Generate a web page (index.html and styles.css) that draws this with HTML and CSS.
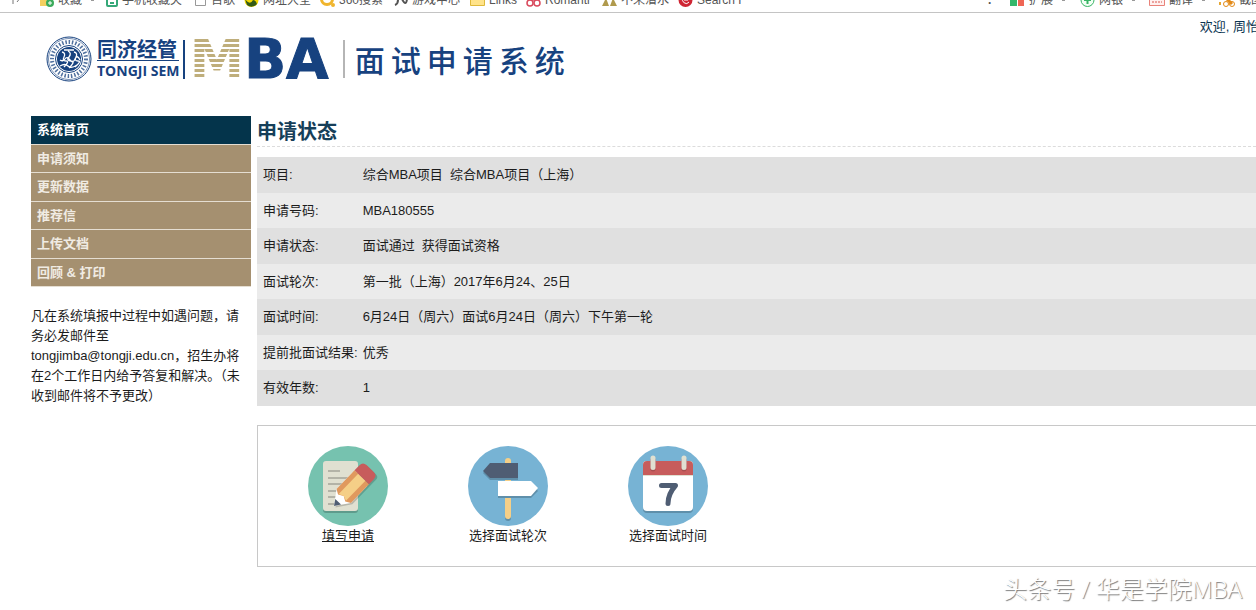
FILE: index.html
```html
<!DOCTYPE html>
<html lang="zh-CN">
<head>
<meta charset="utf-8">
<title>面试申请系统</title>
<link rel="stylesheet" href="styles.css">
</head>
<body>
<div class="bookmarks">
  <span class="mark"><svg width="15" height="16"><path d="M3 1v11M7 10l4-5" stroke="#777" fill="none"/></svg></span>
  <span class="mark"><svg width="15" height="16"><path d="M1 3h12v11H1z" fill="#f5d060"/><circle cx="11" cy="11" r="4" fill="#3cab5c"/><path d="M9 11h4M11 9v4" stroke="#fff"/></svg>收藏 <i class="caret"></i></span>
  <span class="mark"><svg width="12" height="16"><rect x="1" y="1" width="10" height="13" rx="1" fill="none" stroke="#35a878" stroke-width="2"/><path d="M4 11h4" stroke="#35a878" stroke-width="2"/></svg>手机收藏夹</span>
  <span class="mark"><svg width="13" height="16"><path d="M1.500 1.500h10v12h-10z" fill="#fff" stroke="#999"/></svg>百歌</span>
  <span class="mark"><svg width="15" height="16"><circle cx="7.500" cy="8" r="7" fill="#f4d800"/><path d="M1 7q5 7 8 1q3 0 4 4a7 7 0 0 1-10 1z" fill="#345b16"/></svg>网址大全</span>
  <span class="mark"><svg width="15" height="16"><circle cx="7" cy="7" r="5.500" fill="none" stroke="#f0b52d" stroke-width="3"/><circle cx="13" cy="13" r="2" fill="#f0b52d"/></svg>360搜索</span>
  <span class="mark"><svg width="15" height="16"><path d="M2 3q3 1 3 5t-3 5M9 7q4 8 5 0" fill="none" stroke="#555" stroke-width="2"/></svg>游戏中心</span>
  <span class="mark"><svg width="15" height="16"><path d="M.5 3.500h14v10H.5z" fill="#ffe38a" stroke="#dfb93b"/></svg>Links</span>
  <span class="mark"><svg width="15" height="16"><g fill="none" stroke="#d94a5d" stroke-width="1.500"><circle cx="4" cy="11" r="3"/><circle cx="11" cy="11" r="3"/><circle cx="7.500" cy="5" r="3"/></g></svg>Romanti</span>
  <span class="mark"><svg width="15" height="16"><path d="M0 14L4 6l3 8zM8 14l3-8 4 8z" fill="#b09a4d"/></svg>不来潜水</span>
  <span class="mark"><svg width="15" height="16"><circle cx="7.500" cy="8" r="7" fill="#cf2634"/><path d="M10 5a3.500 3.500 0 1 0 1 5M6 8h4" fill="none" stroke="#fff"/></svg>Search F</span>
  <span class="mark dot">.</span>
  <span class="mark"><svg width="15" height="16"><path d="M0 1h7v13H0z" fill="#34b76b"/><path d="M8 8h6v6H8z" fill="#ef6655"/></svg>扩展 <i class="caret"></i></span>
  <span class="mark"><svg width="15" height="16"><circle cx="7.500" cy="8" r="6.500" fill="#f2fff5" stroke="#38b565"/><path d="M4 8h7M7.500 5v7" stroke="#38b565" stroke-width="2"/></svg>网银 <i class="caret"></i></span>
  <span class="mark"><svg width="16" height="16"><path d="M.5 2.500h15v11H.5z" fill="#fff0ee" stroke="#e98279"/><path d="M3 10h10" stroke="#d9574f" stroke-dasharray="2 1"/></svg>翻译 <i class="caret"></i></span>
  <span class="mark"><svg width="16" height="16"><path d="M1 13V2h12" fill="none" stroke="#e5a631" stroke-width="2" stroke-dasharray="3 2"/><path d="M5 4l8 8" stroke="#e38a17" stroke-width="3"/><circle cx="7" cy="12" r="2.500" fill="none" stroke="#e38a17"/><circle cx="13" cy="12" r="2.500" fill="none" stroke="#e38a17"/></svg>截图</span>
</div>
<header class="top">
  <div class="brand">
    <svg class="seal" viewBox="0 0 46 46" role="img" aria-label="同济大学">
      <g fill="none" stroke="#17427f"><circle cx="23" cy="23" r="22"/><circle cx="23" cy="23" r="20.500" stroke-width=".6"/><circle cx="23" cy="23" r="13.500"/></g>
      <circle cx="23" cy="23" r="12" fill="#17427f"/>
      <circle cx="23" cy="23" r="17" fill="none" stroke="#17427f" stroke-width="4" stroke-dasharray="1.500 1.800" opacity=".75"/>
      <g fill="none" stroke="#fff" stroke-width="1.300"><path d="M16 16q4 1 2 5t2 4-2 6M22 15q4 2 1 6t2 4-2 7M28 16q4 1 2 5t2 4-3 6M14 24q3 2 5-1t5 1 5-1 5 1M14 30q5-3 8 0t9-1M18 14h10"/></g>
    </svg>
    <div class="school"><span class="school-cn">同济经管</span><span class="school-en">TONGJI SEM</span></div>
    <div class="mba"><span class="mba-m">M</span><span class="mba-ba">BA</span></div>
    <div class="system"><span>面</span><span>试</span><span>申</span><span>请</span><span>系</span><span>统</span></div>
  </div>
  <div class="welcome">欢迎, 周怡</div>
</header>
<div class="page">
  <aside class="side">
    <nav class="menu">
      <a class="active" href="#">系统首页</a>
      <a href="#">申请须知</a>
      <a href="#">更新数据</a>
      <a href="#">推荐信</a>
      <a href="#">上传文档</a>
      <a href="#">回顾 &amp; 打印</a>
    </nav>
    <p class="note">凡在系统填报中过程中如遇问题，请务必发邮件至 tongjimba@tongji.edu.cn，招生办将在2个工作日内给予答复和解决。（未收到邮件将不予更改）</p>
  </aside>
  <main class="main">
    <h1>申请状态</h1>
    <table class="status">
      <tr><th scope="row">项目:</th><td>综合MBA项目&nbsp; 综合MBA项目（上海）</td></tr>
      <tr><th scope="row">申请号码:</th><td>MBA180555</td></tr>
      <tr><th scope="row">申请状态:</th><td>面试通过&nbsp; 获得面试资格</td></tr>
      <tr><th scope="row">面试轮次:</th><td>第一批（上海）2017年6月24、25日</td></tr>
      <tr><th scope="row">面试时间:</th><td>6月24日（周六）面试6月24日（周六）下午第一轮</td></tr>
      <tr><th scope="row">提前批面试结果:</th><td>优秀</td></tr>
      <tr><th scope="row">有效年数:</th><td>1</td></tr>
    </table>
    <div class="actions">
      <a class="action current" href="#">
        <svg viewBox="0 0 80 80">
          <circle cx="40" cy="40" r="40" fill="#76c2af"/>
          <rect x="15" y="17" width="35" height="50" rx="3" fill="#5e9b8c"/>
          <rect x="15" y="15" width="35" height="50" rx="3" fill="#e0e0d1"/>
          <path d="M20 25h12M20 32h22M20 38h18M20 45h12M20 51h8M20 58h12" stroke="#b3b3a7" stroke-width="1.800"/>
          <g transform="translate(26 60) rotate(-46)">
            <path d="M0 2L14-6h34q4 0 4 4V8q0 4-4 4H14z" fill="#000" opacity=".18"/>
            <path d="M0 0L14-10H37V10H14z" fill="#fff"/>
            <path d="M14-10H40V10H14L11 5l3-5-3-5z" fill="#e0995e"/>
            <path d="M12-5H40V5H12l2-5z" fill="#f5cf87"/>
            <path d="M40-10h7q5 0 5 5V5q0 5-5 5H40z" fill="#c75c5c"/>
            <path d="M0 0l6-4v8z" fill="#4f5d73"/>
          </g>
        </svg>
        <span>填写申请</span>
      </a>
      <a class="action" href="#">
        <svg viewBox="0 0 80 80">
          <circle cx="40" cy="40" r="40" fill="#77b3d4"/>
          <rect x="37" y="14" width="6" height="61" rx="3" fill="#5f8faa"/>
          <rect x="37" y="12" width="6" height="61" rx="3" fill="#f5cf87"/>
          <path d="M15 27L22 19H50V34H22z" fill="#5f8faa"/>
          <path d="M15 25L22 17H50V32H22z" fill="#4f5d73"/>
          <path d="M30 37H63L70 45 63 52H30z" fill="#5f8faa"/>
          <path d="M30 35H63L70 42 63 50H30z" fill="#fff"/>
        </svg>
        <span>选择面试轮次</span>
      </a>
      <a class="action" href="#">
        <svg viewBox="0 0 80 80">
          <circle cx="40" cy="40" r="40" fill="#77b3d4"/>
          <rect x="15" y="17" width="50" height="50" rx="4" fill="#5f8faa"/>
          <rect x="15" y="15" width="50" height="50" rx="4" fill="#fff"/>
          <path d="M15 30V19q0-4 4-4H61q4 0 4 4V30z" fill="#e0e0d1"/>
          <path d="M15 29V19q0-4 4-4H61q4 0 4 4V29z" fill="#c75c5c"/>
          <path d="M25 14V23M56 14V23" stroke="#a84f50" stroke-width="5" stroke-linecap="round"/>
          <path d="M25 12V21.500M56 12V21.500" stroke="#e0e0d1" stroke-width="5" stroke-linecap="round"/>
          <path d="M33.500 39.500H47.500Q40 48 40 57.500" fill="none" stroke="#4f5d73" stroke-width="5" stroke-linecap="round" stroke-linejoin="round"/>
        </svg>
        <span>选择面试时间</span>
      </a>
    </div>
  </main>
</div>
<footer class="credit">头条号 / 华是学院MBA</footer>
</body>
</html>
```
FILE: styles.css
```css
* { box-sizing: border-box; }
body {
  margin: 0;
  overflow: hidden;
  background: #fff;
  color: #1c1c1c;
  font: 13px/20px "Liberation Sans", "Noto Sans CJK SC", sans-serif;
}
a { color: inherit; text-decoration: none; }

.bookmarks {
  display: grid;
  grid-template-columns: 29px 67px 88px 50px 76px 73px 77px 56px 76px 76px 1fr 22px 70px 69px 70px 37px;
  align-content: end;
  height: 13px;
  padding: 0 0 4px 10px;
  overflow: hidden;
  border-bottom: 1px solid #c4c4c4;
  color: #555;
  font-size: 12px;
  line-height: 16px;
}
.mark { display: flex; align-items: center; gap: 4px; white-space: nowrap; }
.mark svg { flex: none; }
.caret { width: 3px; height: 2px; margin-left: 5px; background: #999; }
.dot { font-weight: bold; }

.top { display: flex; justify-content: space-between; height: 103px; padding: 4px 0 0 46px; }
.brand { display: flex; align-items: center; height: 84px; color: #17427f; }
.seal { width: 46px; height: 46px; }
.school { display: flex; flex-direction: column; height: 39px; margin-left: 5px; padding-right: 4px; border-right: 2px solid #17427f; }
.school-cn { border-bottom: 1px solid #17427f; font-size: 20px; line-height: 20px; font-weight: 700; }
.school-en { font: 700 14px/20px "Open Sans", sans-serif; white-space: nowrap; }
.mba { display: flex; margin-left: 4px; font: 700 55px/40px "DejaVu Sans", sans-serif; }
.mba-m {
  background: repeating-linear-gradient(#bfae7b 0 3px, #fff 3px 5px);
  -webkit-background-clip: text;
  background-clip: text;
  color: transparent;
}
.mba-ba { -webkit-text-stroke: 1px #17427f; }
.system { display: flex; gap: 6px; margin-left: 14px; padding-left: 10px; border-left: 2px solid #b5b5b5; font: 500 30px/38px "KaiTi", "AR PL UKai CN", "Noto Sans CJK SC", sans-serif; }
.welcome { margin-right: -3px; color: #0a3450; white-space: nowrap; }

.page { display: grid; grid-template-columns: 220px 1fr; gap: 6px; padding-left: 31px; }
.menu { display: flex; flex-direction: column; }
.menu a { height: 29px; padding: 0 6px; border-bottom: 1px solid #e5ded2; background: #a59070; color: #f0ebe3; font-weight: 700; line-height: 28px; }
.menu a:nth-child(even) { height: 28px; }
.menu .active { background: #04344b; color: #fff; }
.note { margin: 19px 0 0; }

h1 { height: 31px; margin: 0 0 10px; border-bottom: 1px dashed #dcdcdc; color: #163f59; font-size: 20px; line-height: 32px; }
.status { width: 100%; border-collapse: collapse; }
.status tr { height: 36px; background: #e0e0e0; }
.status tr:nth-child(even) { height: 35px; background: #ebebeb; }
.status th, .status td { padding: 0 5px; text-align: left; font-weight: 400; white-space: nowrap; }
.status th { width: 100px; padding: 0 0 0 6px; }
.actions { display: flex; height: 142px; margin-top: 19px; padding: 20px 10px; border: 1px solid #c8c8c8; border-right: 0; }
.action { display: flex; flex-direction: column; align-items: center; width: 160px; }
.action svg { width: 80px; height: 80px; }
.current { text-decoration: underline; }

.credit {
  padding: 6px 14px 0 0;
  color: #fff;
  font: 300 24px/32px "Open Sans", "Noto Sans CJK SC", sans-serif;
  text-align: right;
  text-shadow: 1px 1px 1px #777;
}
```
